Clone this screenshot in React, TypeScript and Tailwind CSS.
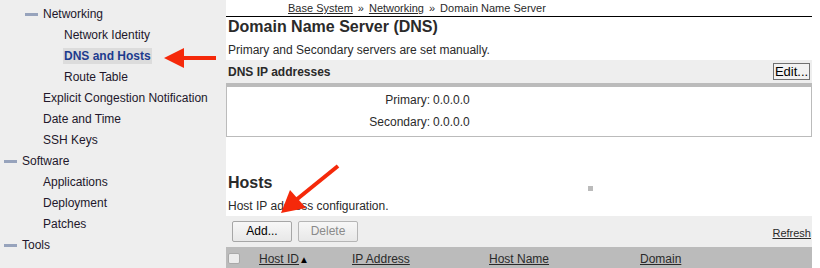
import React from 'react';

const font = { fontFamily: '"Liberation Sans", Arial, sans-serif' };

function Dash() {
  return <span className="inline-block w-[13px] h-[3px] bg-[#97a3bc] mr-[5px] align-middle" />;
}

function SideItem({ indent, children }: { indent: string; children: React.ReactNode }) {
  return <div className={`h-[21px] leading-[21px] whitespace-nowrap ${indent}`}>{children}</div>;
}

function Sidebar() {
  return (
    <div className="w-[226px] shrink-0 bg-[#eeeeee] pt-[4px] text-[12px] text-[#22172b]">
      <SideItem indent="pl-[25px]"><Dash />Networking</SideItem>
      <SideItem indent="pl-[64px]">Network Identity</SideItem>
      <SideItem indent="pl-[63px]">
        <span className="bg-[#dcdcdc] px-px py-[1px] font-bold text-[#1c3b8e]">DNS and Hosts</span>
      </SideItem>
      <SideItem indent="pl-[64px]">Route Table</SideItem>
      <SideItem indent="pl-[43px]">Explicit Congestion Notification</SideItem>
      <SideItem indent="pl-[43px]">Date and Time</SideItem>
      <SideItem indent="pl-[43px]">SSH Keys</SideItem>
      <SideItem indent="pl-[4px]"><Dash />Software</SideItem>
      <SideItem indent="pl-[43px]">Applications</SideItem>
      <SideItem indent="pl-[43px]">Deployment</SideItem>
      <SideItem indent="pl-[43px]">Patches</SideItem>
      <SideItem indent="pl-[4px]"><Dash />Tools</SideItem>
    </div>
  );
}

function Main() {
  return (
    <div className="w-[586px] shrink-0 text-[12px] text-[#2a2a2a]">
      <div className="h-[17px] leading-[16px] border-b border-black pl-[62px] whitespace-nowrap text-[11px]">
        <span className="underline">Base System</span>
        <span className="mx-[5px]">»</span>
        <span className="underline">Networking</span>
        <span className="mx-[5px]">»</span>
        Domain Name Server
      </div>
      <h1 className="mt-px pl-[2px] text-[16px] leading-[18px] font-bold">Domain Name Server (DNS)</h1>
      <p className="mt-[7px] pl-[2px] leading-[14px]">Primary and Secondary servers are set manually.</p>

      <div className="mt-[3px] h-[23px] bg-[#eeeeee] flex items-center justify-between pl-[2px] pr-[2px]">
        <span className="font-bold">DNS IP addresses</span>
        <button className="h-[17px] w-[37px] border border-[#707070] bg-[#f2f2f2] text-[13px] leading-[15px] text-black">Edit...</button>
      </div>
      <div className="border-t-4 border-x border-b border-[#bbbbbb] pt-[3px] pb-[3px] flex flex-col gap-px">
        <div className="flex leading-[21px]">
          <span className="w-[203px] text-right">Primary:</span>
          <span className="pl-[3px]">0.0.0.0</span>
        </div>
        <div className="flex leading-[21px]">
          <span className="w-[203px] text-right">Secondary:</span>
          <span className="pl-[3px]">0.0.0.0</span>
        </div>
      </div>

      <h2 className="mt-[37px] pl-[2px] text-[16px] leading-[18px] font-bold">Hosts</h2>
      <p className="mt-[7px] pl-[2px] leading-[14px]">Host IP address configuration.</p>

      <div className="mt-[3px] h-[31px] bg-[#eeeeee] flex items-center pl-[6px] pr-px gap-[6px]">
        <button className="h-[21px] w-[60px] border border-[#a6a6a6] rounded-[2px] bg-gradient-to-b from-[#f7f7f7] to-[#e8e8e8] text-black leading-[19px]">Add...</button>
        <button className="h-[21px] w-[60px] border border-[#b5b5b5] rounded-[2px] bg-gradient-to-b from-[#f7f7f7] to-[#e8e8e8] text-[#8a8a8a] leading-[19px]">Delete</button>
        <span className="ml-auto mt-[3px] text-[11px] underline">Refresh</span>
      </div>
      <div className="h-[22px] bg-[#bbbbbb] flex items-center">
        <div className="w-[33px] pl-[2px] flex items-center">
          <span className="w-[12px] h-[11px] rounded-[2px] border border-[#a9a9a9] bg-[#ececec]" />
        </div>
        <div className="w-[93px] pt-[2px]"><span className="underline">Host ID</span><span className="text-[10px] text-black">▲</span></div>
        <div className="w-[137px] pt-[2px] underline">IP Address</div>
        <div className="w-[151px] pt-[2px] underline">Host Name</div>
        <div className="pt-[2px] underline">Domain</div>
      </div>
    </div>
  );
}

export default function App() {
  return (
    <div className="relative w-[820px] h-[268px] overflow-hidden bg-white flex" style={font}>
      <Sidebar />
      <Main />
      <span className="absolute left-[588px] top-[186px] w-[5px] h-[5px] bg-[#bbbbbb]" />
      <svg className="absolute left-0 top-0 pointer-events-none" width="820" height="268">
        <polygon points="164,58 184,48 184,56 216,56 216,60 184,60 184,68" fill="#f5290a" />
        <line x1="338" y1="166" x2="296" y2="200" stroke="#f5290a" strokeWidth="4" />
        <polygon points="281,213 290,190 306,208" fill="#f5290a" />
      </svg>
    </div>
  );
}
